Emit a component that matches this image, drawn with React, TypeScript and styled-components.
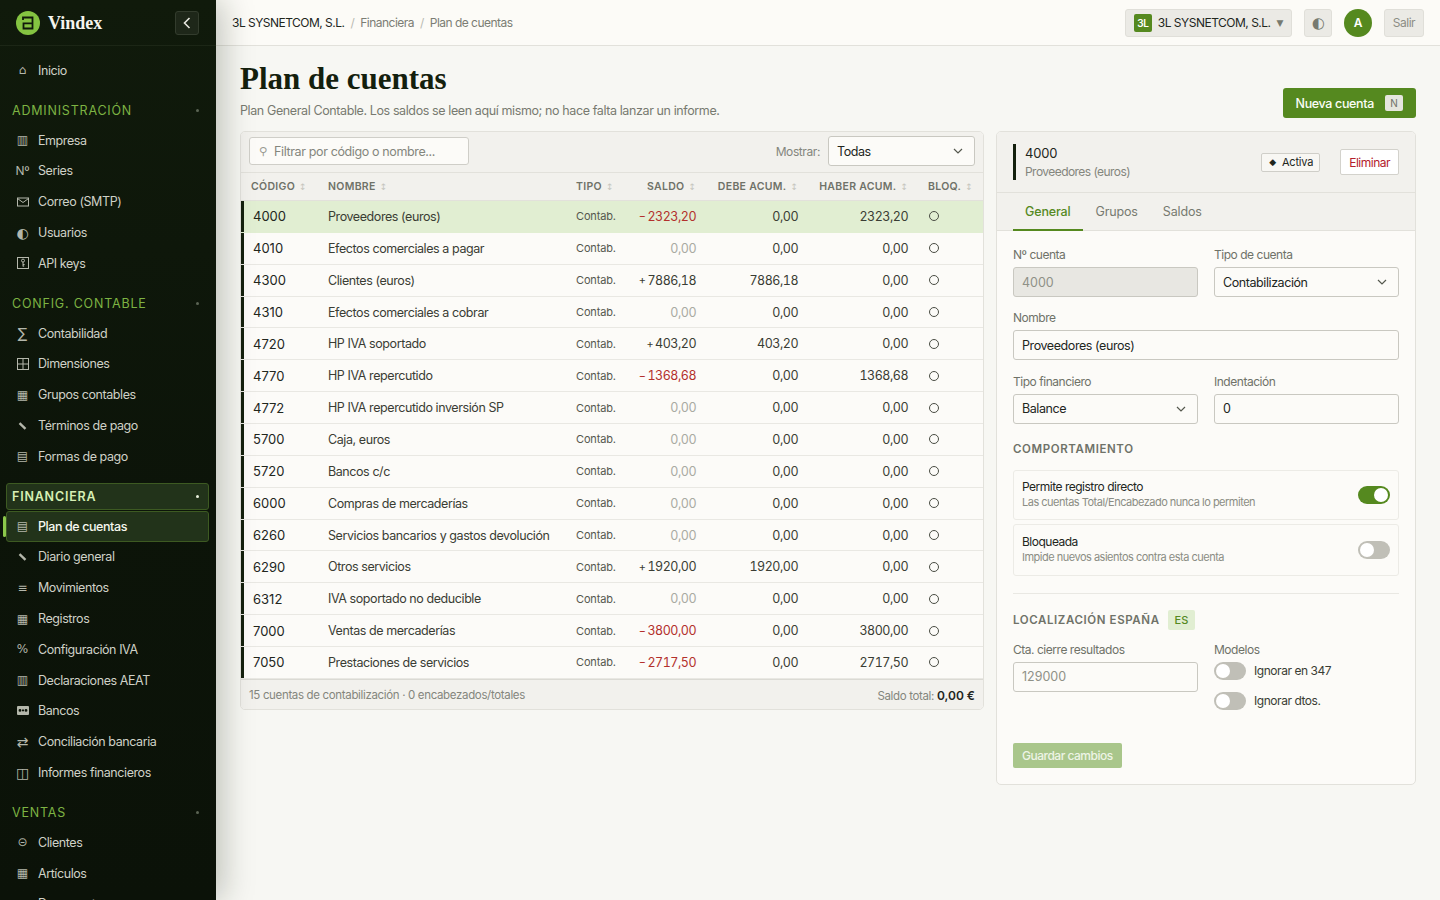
import React from 'react'
import styled, { createGlobalStyle } from 'styled-components'

const GlobalStyle = createGlobalStyle`
  html, body, #root {
    margin: 0;
    height: 100%;
  }
  body {
    font-family: Inter, "Liberation Sans", sans-serif;
    background: #f7f7f3;
    color: #22261d;
    overflow: hidden;
  }
  * { box-sizing: border-box; }
`

const Shell = styled.div`
  display: flex;
  height: 900px;
  overflow: hidden;
`

/* sidebar */
const Sidebar = styled.aside`
  width: 216px;
  flex: none;
  height: 900px;
  overflow: hidden;
  background: linear-gradient(180deg, #101a0b 0%, #0c1409 55%, #0b1208 100%);
  box-shadow: 6px 0 30px rgba(20, 30, 10, 0.26);
  position: relative;
  z-index: 2;
`
const Brand = styled.div`
  height: 46px;
  display: flex;
  align-items: center;
  padding: 0 17px 0 16px;
  border-bottom: 1px solid #1c2616;
`
const BrandName = styled.span`
  margin-left: 8px;
  padding-top: 2px;
  font-family: "Liberation Serif", serif;
  font-weight: 700;
  font-size: 18px;
  color: #f5f5ef;
  flex: 1;
`
const Collapse = styled.button`
  width: 24px;
  height: 24px;
  padding: 0;
  display: flex;
  align-items: center;
  justify-content: center;
  background: #1e2719;
  border: 1px solid #333c2d;
  border-radius: 3px;
  color: #e8e8e0;
`
const Nav = styled.nav`
  padding: 9px 7px 0 6px;
`
const NavSection = styled.div`
  margin-top: 11px;
  &:first-child { margin-top: 0; }
`
const SectionTitle = styled.div<{ $open?: boolean }>`
  height: 27px;
  margin-bottom: 1px;
  padding: 0 5px;
  display: flex;
  align-items: center;
  justify-content: space-between;
  font-size: 12.5px;
  letter-spacing: 0.8px;
  text-transform: uppercase;
  color: ${p => (p.$open ? '#d7efb4' : '#7db343')};
  font-weight: ${p => (p.$open ? 600 : 400)};
  border: 1px solid ${p => (p.$open ? '#3d5a22' : 'transparent')};
  border-radius: 3px;
  background: ${p => (p.$open ? '#22331a' : 'transparent')};
`
const Caret = styled.span<{ $open?: boolean }>`
  width: 3px;
  height: 3px;
  margin-right: 4px;
  border-radius: 50%;
  background: ${p => (p.$open ? '#e8f0dc' : '#5b6454')};
`
const NavItem = styled.div<{ $active?: boolean }>`
  position: relative;
  height: 30.8px;
  padding: 0 6px 0 0;
  display: flex;
  align-items: center;
  font-size: 12.5px;
  letter-spacing: -0.42px;
  color: ${p => (p.$active ? '#f6f8ef' : '#cfd1c7')};
  font-weight: ${p => (p.$active ? 500 : 400)};
  border: 1px solid ${p => (p.$active ? '#3d5a22' : 'transparent')};
  border-radius: 3px;
  background: ${p => (p.$active ? '#22331a' : 'transparent')};
  ${p =>
    p.$active &&
    `&::before {
      content: '';
      position: absolute;
      left: -4px;
      top: 4px;
      bottom: 4px;
      width: 3px;
      border-radius: 2px;
      background: #8cc84b;
    }`}
`
const NavIcon = styled.span`
  width: 31px;
  height: 14px;
  flex: none;
  display: flex;
  align-items: center;
  justify-content: center;
  font-family: "DejaVu Sans", sans-serif;
  font-size: 12px;
  letter-spacing: 0;
  color: #b4b7ab;
`
const BigGlyph = styled.span`
  font-size: 14px;
`
const NoGlyph = styled.span`
  font-family: Inter, sans-serif;
  font-size: 12px;
  letter-spacing: -0.3px;
`

/* page */
const Content = styled.div`
  flex: 1;
  min-width: 0;
  display: flex;
  flex-direction: column;
`
const Topbar = styled.header`
  height: 46px;
  flex: none;
  display: flex;
  align-items: center;
  justify-content: space-between;
  padding: 0 16px;
  background: #fcfbf7;
  border-bottom: 1px solid #e2e1db;
`
const Crumbs = styled.div`
  display: flex;
  align-items: center;
  gap: 6px;
  font-size: 12px;
  letter-spacing: -0.52px;
  color: #7b7d74;
`
const CrumbRoot = styled.span`
  color: #22261d;
`
const CrumbSep = styled.span`
  color: #b9bab2;
`
const TopActions = styled.div`
  display: flex;
  align-items: center;
  gap: 12px;
`
const GreyButton = styled.button`
  height: 28px;
  padding: 0 8px;
  display: flex;
  align-items: center;
  gap: 6px;
  background: #ebeae5;
  border: 1px solid #e0dfd9;
  border-radius: 3px;
  font: inherit;
  font-size: 12px;
  letter-spacing: -0.5px;
  color: #22261d;
`
const OrgBadge = styled.span`
  width: 18px;
  height: 18px;
  display: flex;
  align-items: center;
  justify-content: center;
  background: #55891f;
  border-radius: 2px;
  color: #fff;
  font-size: 10px;
  font-weight: 600;
`
const OrgArrow = styled.span`
  font-family: "DejaVu Sans", sans-serif;
  font-size: 9px;
  color: #777a70;
`
const ThemeButton = styled(GreyButton)`
  width: 28px;
  justify-content: center;
  padding: 0;
  font-family: "DejaVu Sans", sans-serif;
  font-size: 15px;
  color: #777a70;
`
const Avatar = styled.div`
  width: 28px;
  height: 28px;
  border-radius: 50%;
  background: #55891f;
  color: #fff;
  font-size: 12px;
  font-weight: 600;
  display: flex;
  align-items: center;
  justify-content: center;
`
const LogoutButton = styled(GreyButton)`
  width: 40px;
  justify-content: center;
  padding: 0;
  color: #8b8d84;
`
const Main = styled.main`
  flex: 1;
  padding: 14px 24px 0;
  min-height: 0;
`
const PageHead = styled.div`
  display: flex;
  justify-content: space-between;
  align-items: flex-end;
  height: 58px;
`
const Title = styled.h1`
  margin: 0 0 5px;
  font-family: "Liberation Serif", serif;
  font-weight: 700;
  font-size: 31px;
  line-height: 38px;
  color: #14200d;
`
const Subtitle = styled.p`
  margin: 0;
  font-size: 12.5px;
  line-height: 15px;
  letter-spacing: -0.39px;
  color: #777a70;
`
const PrimaryButton = styled.button`
  height: 30px;
  padding: 0 13px;
  display: flex;
  align-items: center;
  gap: 11px;
  background: #55891f;
  border: none;
  border-radius: 3px;
  color: #fbfdf6;
  font: inherit;
  font-size: 12.5px;
  font-weight: 500;
  letter-spacing: -0.35px;
`
const Kbd = styled.span`
  width: 18px;
  height: 16px;
  display: flex;
  align-items: center;
  justify-content: center;
  background: #e6e6de;
  border-radius: 2px;
  font-size: 10px;
  font-weight: 400;
  letter-spacing: 0;
  color: #6f7268;
`
const Columns = styled.div`
  margin-top: 13px;
  display: flex;
  align-items: flex-start;
  gap: 12px;
`
const Card = styled.section`
  background: #fcfbf8;
  border: 1px solid #e2e1db;
  border-radius: 5px;
  overflow: hidden;
`

/* table */
const TableCard = styled(Card)`
  width: 744px;
  flex: none;
`
const Toolbar = styled.div`
  height: 41px;
  padding: 0 8px 2px;
  display: flex;
  align-items: center;
  justify-content: space-between;
  background: #f2f1ed;
  border-bottom: 1px solid #e2e1db;
`
const SearchBox = styled.div`
  width: 220px;
  height: 28px;
  padding: 0 9px;
  display: flex;
  align-items: center;
  gap: 7px;
  background: #fcfbf8;
  border: 1px solid #cfcec8;
  border-radius: 3px;
  font-size: 12.5px;
  letter-spacing: -0.37px;
  color: #84867d;
`
const SearchGlyph = styled.span`
  font-family: "DejaVu Sans", sans-serif;
  font-size: 11px;
  letter-spacing: 0;
  color: #9a9c93;
`
const ShowGroup = styled.div`
  display: flex;
  align-items: center;
  gap: 8px;
  font-size: 12px;
  letter-spacing: -0.4px;
  color: #84867d;
`
const SelectBox = styled.div<{ $width: number }>`
  width: ${p => p.$width}px;
  height: 30px;
  padding: 0 11px 0 8px;
  display: flex;
  align-items: center;
  justify-content: space-between;
  background: #fcfbf8;
  border: 1px solid #c9c8c1;
  border-radius: 3px;
  font-size: 12.5px;
  letter-spacing: -0.42px;
  color: #22261d;
`
const TableGrid = styled.div`
  display: grid;
  grid-template-columns: 77px 248px 66px 74px 102px 110px 65px;
`
const HeadRow = styled(TableGrid)`
  height: 28px;
  align-items: center;
  background: #f2f1ed;
  border-bottom: 1px solid #e2e1db;
`
const HeadCell = styled.div<{ $right?: boolean }>`
  padding: 0 10px;
  display: flex;
  align-items: center;
  justify-content: ${p => (p.$right ? 'flex-end' : 'flex-start')};
  font-size: 10.5px;
  font-weight: 600;
  letter-spacing: 0.3px;
  color: #6f7268;
  white-space: nowrap;
`
const SortMark = styled.span`
  margin-left: 4px;
  font-family: "DejaVu Sans", sans-serif;
  font-size: 9px;
  font-weight: 400;
  letter-spacing: 0;
  color: #c5c5bd;
`
const Row = styled(TableGrid)<{ $selected?: boolean }>`
  height: 31.87px;
  align-items: center;
  font-size: 12.5px;
  letter-spacing: -0.42px;
  background: ${p => (p.$selected ? '#e1eed2' : 'transparent')};
  border-bottom: 1px solid ${p => (p.$selected ? '#e1eed2' : '#e9e8e3')};
`
const CodeCell = styled.div`
  height: 100%;
  padding-left: 9px;
  display: flex;
  align-items: center;
  border-left: 3px solid #14200d;
  font-size: 13px;
  letter-spacing: 0;
  color: #22261d;
`
const NameCell = styled.div`
  padding: 0 10px;
  color: #3a3d34;
  white-space: nowrap;
`
const TypeCell = styled.div`
  padding: 0 10px;
  font-size: 11px;
  letter-spacing: -0.15px;
  color: #55584e;
`
const NumCell = styled.div<{ $tone?: string }>`
  padding-right: 10px;
  display: flex;
  justify-content: flex-end;
  align-items: center;
  font-variant-numeric: tabular-nums;
  letter-spacing: -0.5px;
  color: ${p => p.$tone ?? '#3a3d34'};
`
const Sign = styled.span`
  margin-right: 2px;
  font-size: 11px;
`
const BlockCell = styled.div`
  padding: 0 10px;
  display: flex;
`
const Ring = styled.span`
  width: 10px;
  height: 10px;
  margin-left: 1px;
  border: 1px solid #4a4d44;
  border-radius: 50%;
`
const TableFoot = styled.div`
  height: 30px;
  padding: 2px 8px 0;
  display: flex;
  align-items: center;
  justify-content: space-between;
  background: #f2f1ed;
  border-top: 1px solid #dbdad4;
  font-size: 11.5px;
  letter-spacing: -0.34px;
  color: #84867d;
`
const FootTotal = styled.b`
  font-weight: 600;
  font-size: 12px;
  letter-spacing: 0;
  color: #22261d;
`

/* detail */
const DetailCard = styled(Card)`
  flex: 1;
  height: 654px;
`
const DetailHead = styled.div`
  height: 61px;
  padding: 0 16px;
  display: flex;
  align-items: center;
  background: #f2f1ed;
  border-bottom: 1px solid #e2e1db;
`
const DetailId = styled.div`
  flex: 1;
  height: 36px;
  padding-left: 9px;
  border-left: 3px solid #14200d;
  display: flex;
  flex-direction: column;
  justify-content: space-between;
  font-size: 13px;
  line-height: 18px;
  letter-spacing: -0.2px;
`
const DetailSub = styled.span`
  font-size: 12px;
  line-height: 16px;
  letter-spacing: -0.55px;
  color: #84867d;
`
const StateBadge = styled.span`
  height: 19px;
  padding: 0 6px 0 7px;
  display: flex;
  align-items: center;
  gap: 6px;
  background: #f8f7f3;
  border: 1px solid #cfcec8;
  border-radius: 2px;
  font-size: 11px;
  letter-spacing: -0.2px;
`
const Diamond = styled.span`
  font-family: "DejaVu Sans", sans-serif;
  font-size: 9px;
`
const DangerButton = styled.button`
  height: 26px;
  margin-left: 20px;
  padding: 0 8px;
  background: #fff;
  border: 1px solid #d3d2cc;
  border-radius: 2px;
  color: #b3202c;
  font: inherit;
  font-size: 12px;
  letter-spacing: -0.5px;
`
const Tabs = styled.div`
  height: 38px;
  padding: 0 16px;
  display: flex;
  gap: 1px;
  background: #f2f1ed;
  border-bottom: 1px solid #e2e1db;
`
const Tab = styled.div<{ $active?: boolean }>`
  padding: 0 12px;
  display: flex;
  align-items: center;
  height: 38px;
  font-size: 12.5px;
  letter-spacing: -0.15px;
  color: ${p => (p.$active ? '#55891f' : '#777a70')};
  font-weight: ${p => (p.$active ? 500 : 400)};
  border-bottom: 2px solid ${p => (p.$active ? '#55891f' : 'transparent')};
`
const Form = styled.div`
  padding: 16px 16px 0;
`
const FieldRow = styled.div`
  display: grid;
  grid-template-columns: 185px 185px;
  gap: 16px;
  margin-bottom: 13.25px;
`
const Field = styled.div<{ $wide?: boolean }>`
  grid-column: ${p => (p.$wide ? '1 / -1' : 'auto')};
`
const Label = styled.div`
  margin-bottom: 4px;
  font-size: 12px;
  line-height: 16px;
  letter-spacing: -0.47px;
  color: #6f7268;
`
const TextInput = styled.div<{ $disabled?: boolean; $muted?: boolean }>`
  height: 30px;
  padding: 0 8px;
  display: flex;
  align-items: center;
  background: ${p => (p.$disabled ? '#e8e7e2' : '#fcfbf8')};
  border: 1px solid #c9c8c1;
  border-radius: 3px;
  font-size: 12.5px;
  letter-spacing: ${p => (p.$disabled || p.$muted ? '0' : '-0.42px')};
  color: ${p => (p.$disabled || p.$muted ? '#8f9187' : '#22261d')};
`
const GroupTitle = styled.div<{ $top: number; $bottom: number }>`
  margin: ${p => p.$top}px 0 ${p => p.$bottom}px;
  display: flex;
  align-items: center;
  gap: 8px;
  font-size: 11.5px;
  font-weight: 600;
  letter-spacing: 0.6px;
  color: #6f7268;
`
const OptionRow = styled.div<{ $height: number }>`
  height: ${p => p.$height}px;
  margin-bottom: 4px;
  padding: 0 8px;
  display: flex;
  align-items: center;
  justify-content: space-between;
  border: 1px solid #ecebe6;
  border-radius: 3px;
`
const OptionName = styled.div`
  font-size: 12px;
  line-height: 16px;
  letter-spacing: -0.5px;
  color: #22261d;
`
const OptionHelp = styled.div`
  font-size: 11px;
  line-height: 15px;
  letter-spacing: -0.5px;
  color: #8b8d84;
`
const Switch = styled.span<{ $on?: boolean }>`
  position: relative;
  flex: none;
  width: 32px;
  height: 18px;
  border-radius: 9px;
  background: ${p => (p.$on ? '#55891f' : '#c0bfb7')};
  &::after {
    content: '';
    position: absolute;
    top: 2px;
    left: ${p => (p.$on ? '16px' : '2px')};
    width: 14px;
    height: 14px;
    border-radius: 50%;
    background: #fff;
  }
`
const Divider = styled.div`
  height: 1px;
  margin-top: 17px;
  background: #e9e8e3;
`
const EsTag = styled.span`
  height: 20px;
  padding: 0 7px;
  display: flex;
  align-items: center;
  background: #e1eed2;
  border-radius: 2px;
  font-size: 11px;
  font-weight: 500;
  letter-spacing: 0;
  color: #55891f;
`
const CheckLine = styled.div`
  display: flex;
  align-items: center;
  gap: 8px;
  height: 18px;
  margin-bottom: 12px;
  font-size: 12px;
  letter-spacing: -0.45px;
  color: #3a3d34;
`
const SaveButton = styled.button`
  height: 25px;
  margin-top: 8px;
  padding: 0 9px;
  background: #a9c68b;
  border: none;
  border-radius: 2px;
  color: #eef4e6;
  font: inherit;
  font-size: 12px;
  font-weight: 500;
  letter-spacing: -0.5px;
`

type Item = { icon: React.ReactNode; label: string; active?: boolean }
type Section = { title?: string; open?: boolean; items: Item[] }

const iconProps = { width: 12, height: 12, viewBox: '0 0 12 12', fill: 'none', stroke: '#b4b7ab' }

const BankIcon = () => (
  <svg width="12" height="9" viewBox="0 0 12 9" fill="#b4b7ab">
    <path d="M1 0h10a1 1 0 0 1 1 1v7a1 1 0 0 1-1 1H1a1 1 0 0 1-1-1V1a1 1 0 0 1 1-1Zm2 3a1.4 1.4 0 1 0 0 2.8A1.4 1.4 0 0 0 3 3Zm6 0a1.4 1.4 0 1 0 0 2.8A1.4 1.4 0 0 0 9 3ZM5 3.6v1.6h2V3.6H5Z" />
  </svg>
)
const MailIcon = () => (
  <svg {...iconProps}>
    <rect x="0.5" y="2" width="11" height="8" />
    <path d="M0.5 2.5L6 6.5l5.5-4" />
  </svg>
)
const KeyIcon = () => (
  <svg {...iconProps}>
    <rect x="0.5" y="0.5" width="11" height="11" />
    <circle cx="6" cy="3.6" r="1.5" />
    <path d="M6 5v4.5M6 7.5h1.6M6 9h1.2" />
  </svg>
)
const GridIcon = () => (
  <svg {...iconProps}>
    <rect x="0.5" y="0.5" width="11" height="11" />
    <path d="M6 0.5v11M0.5 6h11" />
  </svg>
)
const PenIcon = () => (
  <svg {...iconProps} strokeWidth="2.4">
    <path d="M2.5 3.2l6 5.6" />
  </svg>
)

const sections: Section[] = [
  { items: [{ icon: '⌂', label: 'Inicio' }] },
  {
    title: 'Administración',
    items: [
      { icon: '▥', label: 'Empresa' },
      { icon: <NoGlyph>Nº</NoGlyph>, label: 'Series' },
      { icon: <MailIcon />, label: 'Correo (SMTP)' },
      { icon: <BigGlyph>◐</BigGlyph>, label: 'Usuarios' },
      { icon: <KeyIcon />, label: 'API keys' },
    ],
  },
  {
    title: 'Config. contable',
    items: [
      { icon: <BigGlyph>∑</BigGlyph>, label: 'Contabilidad' },
      { icon: <GridIcon />, label: 'Dimensiones' },
      { icon: '▦', label: 'Grupos contables' },
      { icon: <PenIcon />, label: 'Términos de pago' },
      { icon: '▤', label: 'Formas de pago' },
    ],
  },
  {
    title: 'Financiera',
    open: true,
    items: [
      { icon: '▤', label: 'Plan de cuentas', active: true },
      { icon: <PenIcon />, label: 'Diario general' },
      { icon: '≡', label: 'Movimientos' },
      { icon: '▦', label: 'Registros' },
      { icon: '%', label: 'Configuración IVA' },
      { icon: '▥', label: 'Declaraciones AEAT' },
      { icon: <BankIcon />, label: 'Bancos' },
      { icon: <BigGlyph>⇄</BigGlyph>, label: 'Conciliación bancaria' },
      { icon: <BigGlyph>◫</BigGlyph>, label: 'Informes financieros' },
    ],
  },
  {
    title: 'Ventas',
    items: [
      { icon: '⊝', label: 'Clientes' },
      { icon: '▦', label: 'Artículos' },
      { icon: '▤', label: 'Documentos' },
    ],
  },
]

const columns = [
  { label: 'CÓDIGO' },
  { label: 'NOMBRE' },
  { label: 'TIPO' },
  { label: 'SALDO', right: true },
  { label: 'DEBE ACUM.', right: true },
  { label: 'HABER ACUM.', right: true },
  { label: 'BLOQ.' },
]

const accounts = [
  ['4000', 'Proveedores (euros)', '-2323,20', '0,00', '2323,20'],
  ['4010', 'Efectos comerciales a pagar', '0,00', '0,00', '0,00'],
  ['4300', 'Clientes (euros)', '+7886,18', '7886,18', '0,00'],
  ['4310', 'Efectos comerciales a cobrar', '0,00', '0,00', '0,00'],
  ['4720', 'HP IVA soportado', '+403,20', '403,20', '0,00'],
  ['4770', 'HP IVA repercutido', '-1368,68', '0,00', '1368,68'],
  ['4772', 'HP IVA repercutido inversión SP', '0,00', '0,00', '0,00'],
  ['5700', 'Caja, euros', '0,00', '0,00', '0,00'],
  ['5720', 'Bancos c/c', '0,00', '0,00', '0,00'],
  ['6000', 'Compras de mercaderías', '0,00', '0,00', '0,00'],
  ['6260', 'Servicios bancarios y gastos devolución', '0,00', '0,00', '0,00'],
  ['6290', 'Otros servicios', '+1920,00', '1920,00', '0,00'],
  ['6312', 'IVA soportado no deducible', '0,00', '0,00', '0,00'],
  ['7000', 'Ventas de mercaderías', '-3800,00', '0,00', '3800,00'],
  ['7050', 'Prestaciones de servicios', '-2717,50', '0,00', '2717,50'],
]

const Chevron = () => (
  <svg width="10" height="6" viewBox="0 0 10 6" fill="none" stroke="#55584e" strokeWidth="1.2">
    <path d="M1 1l4 4 4-4" />
  </svg>
)

const Logo = () => (
  <svg width="24" height="24" viewBox="0 0 24 24">
    <circle cx="12" cy="12" r="12" fill="#84c341" />
    <path d="M7 9V6.5h9.5v11H7.5v-5.2h9" fill="none" stroke="#10190b" strokeWidth="1.8" />
  </svg>
)

function saldoTone(value: string) {
  if (value.startsWith('-')) return '#b3302c'
  if (value === '0,00') return '#a9aaa2'
  return '#3a3d34'
}

function Saldo({ value }: { value: string }) {
  const signed = value.startsWith('-') || value.startsWith('+')
  if (!signed) return <>{value}</>
  return (
    <>
      <Sign>{value[0] === '-' ? '\u2212' : '+'}</Sign>
      {value.slice(1)}
    </>
  )
}

export default function App() {
  return (
    <>
      <GlobalStyle />
      <Shell>
        <Sidebar>
          <Brand>
            <Logo />
            <BrandName>Vindex</BrandName>
            <Collapse>
              <svg width="8" height="12" viewBox="0 0 8 12" fill="none" stroke="currentColor" strokeWidth="1.6">
                <path d="M6.5 1L1.5 6l5 5" />
              </svg>
            </Collapse>
          </Brand>
          <Nav>
            {sections.map((section, i) => (
              <NavSection key={i}>
                {section.title && (
                  <SectionTitle $open={section.open}>
                    {section.title}
                    <Caret $open={section.open} />
                  </SectionTitle>
                )}
                {section.items.map(item => (
                  <NavItem key={item.label} $active={item.active}>
                    <NavIcon>{item.icon}</NavIcon>
                    {item.label}
                  </NavItem>
                ))}
              </NavSection>
            ))}
          </Nav>
        </Sidebar>
        <Content>
          <Topbar>
            <Crumbs>
              <CrumbRoot>3L SYSNETCOM, S.L.</CrumbRoot>
              <CrumbSep>/</CrumbSep>
              <span>Financiera</span>
              <CrumbSep>/</CrumbSep>
              <span>Plan de cuentas</span>
            </Crumbs>
            <TopActions>
              <GreyButton>
                <OrgBadge>3L</OrgBadge>
                3L SYSNETCOM, S.L.
                <OrgArrow>▼</OrgArrow>
              </GreyButton>
              <ThemeButton>◐</ThemeButton>
              <Avatar>A</Avatar>
              <LogoutButton>Salir</LogoutButton>
            </TopActions>
          </Topbar>
          <Main>
            <PageHead>
              <div>
                <Title>Plan de cuentas</Title>
                <Subtitle>Plan General Contable. Los saldos se leen aquí mismo; no hace falta lanzar un informe.</Subtitle>
              </div>
              <PrimaryButton>
                Nueva cuenta
                <Kbd>N</Kbd>
              </PrimaryButton>
            </PageHead>
            <Columns>
              <TableCard>
                <Toolbar>
                  <SearchBox>
                    <SearchGlyph>⚲</SearchGlyph>
                    Filtrar por código o nombre...
                  </SearchBox>
                  <ShowGroup>
                    Mostrar:
                    <SelectBox $width={147}>
                      Todas
                      <Chevron />
                    </SelectBox>
                  </ShowGroup>
                </Toolbar>
                <HeadRow>
                  {columns.map(col => (
                    <HeadCell key={col.label} $right={col.right}>
                      {col.label}
                      <SortMark>↕</SortMark>
                    </HeadCell>
                  ))}
                </HeadRow>
                {accounts.map(([code, name, saldo, debe, haber], i) => (
                  <Row key={code} $selected={i === 0}>
                    <CodeCell>{code}</CodeCell>
                    <NameCell>{name}</NameCell>
                    <TypeCell>Contab.</TypeCell>
                    <NumCell $tone={saldoTone(saldo)}>
                      <Saldo value={saldo} />
                    </NumCell>
                    <NumCell>{debe}</NumCell>
                    <NumCell>{haber}</NumCell>
                    <BlockCell>
                      <Ring />
                    </BlockCell>
                  </Row>
                ))}
                <TableFoot>
                  <span>15 cuentas de contabilización · 0 encabezados/totales</span>
                  <span>
                    Saldo total: <FootTotal>0,00 €</FootTotal>
                  </span>
                </TableFoot>
              </TableCard>
              <DetailCard>
                <DetailHead>
                  <DetailId>
                    4000
                    <DetailSub>Proveedores (euros)</DetailSub>
                  </DetailId>
                  <StateBadge>
                    <Diamond>◆</Diamond>
                    Activa
                  </StateBadge>
                  <DangerButton>Eliminar</DangerButton>
                </DetailHead>
                <Tabs>
                  <Tab $active>General</Tab>
                  <Tab>Grupos</Tab>
                  <Tab>Saldos</Tab>
                </Tabs>
                <Form>
                  <FieldRow>
                    <Field>
                      <Label>Nº cuenta</Label>
                      <TextInput $disabled>4000</TextInput>
                    </Field>
                    <Field>
                      <Label>Tipo de cuenta</Label>
                      <SelectBox $width={185}>
                        Contabilización
                        <Chevron />
                      </SelectBox>
                    </Field>
                  </FieldRow>
                  <FieldRow>
                    <Field $wide>
                      <Label>Nombre</Label>
                      <TextInput>Proveedores (euros)</TextInput>
                    </Field>
                  </FieldRow>
                  <FieldRow>
                    <Field>
                      <Label>Tipo financiero</Label>
                      <SelectBox $width={185}>
                        Balance
                        <Chevron />
                      </SelectBox>
                    </Field>
                    <Field>
                      <Label>Indentación</Label>
                      <TextInput>0</TextInput>
                    </Field>
                  </FieldRow>
                  <GroupTitle $top={18.5} $bottom={13.5}>COMPORTAMIENTO</GroupTitle>
                  <OptionRow $height={50}>
                    <div>
                      <OptionName>Permite registro directo</OptionName>
                      <OptionHelp>Las cuentas Total/Encabezado nunca lo permiten</OptionHelp>
                    </div>
                    <Switch $on />
                  </OptionRow>
                  <OptionRow $height={52}>
                    <div>
                      <OptionName>Bloqueada</OptionName>
                      <OptionHelp>Impide nuevos asientos contra esta cuenta</OptionHelp>
                    </div>
                    <Switch />
                  </OptionRow>
                  <Divider />
                  <GroupTitle $top={16.25} $bottom={12}>
                    LOCALIZACIÓN ESPAÑA
                    <EsTag>ES</EsTag>
                  </GroupTitle>
                  <FieldRow>
                    <Field>
                      <Label>Cta. cierre resultados</Label>
                      <TextInput $muted>129000</TextInput>
                    </Field>
                    <Field>
                      <Label>Modelos</Label>
                      <CheckLine>
                        <Switch />
                        Ignorar en 347
                      </CheckLine>
                      <CheckLine>
                        <Switch />
                        Ignorar dtos.
                      </CheckLine>
                    </Field>
                  </FieldRow>
                  <SaveButton>Guardar cambios</SaveButton>
                </Form>
              </DetailCard>
            </Columns>
          </Main>
        </Content>
      </Shell>
    </>
  )
}
